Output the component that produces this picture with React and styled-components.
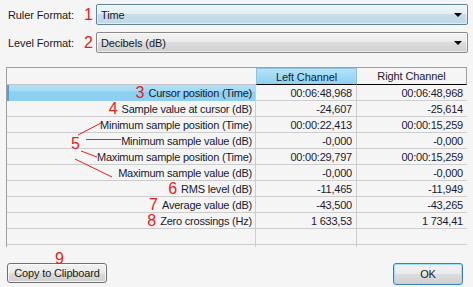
import React from "react";
import styled, { createGlobalStyle } from "styled-components";

const Global = createGlobalStyle`
  html, body { margin: 0; padding: 0; background: #f5f5f5; }
  body { font-family: "Liberation Sans", Arial, sans-serif; font-size: 11px; color: #1a1a1a; letter-spacing: -0.1px; }
`;

const Window = styled.div`
  width: 473px;
  height: 287px;
  box-sizing: border-box;
  padding-top: 4px;
  display: flex;
  flex-direction: column;
  background: #f5f5f5;
  overflow: hidden;
`;

const FormRow = styled.div`
  display: grid;
  grid-template-columns: 76px 12px 372px;
  align-items: center;
  padding-left: 8px;
  height: 21px;
  margin-bottom: ${(p) => p.$gap || 0}px;
`;

const FormLabel = styled.span`
  color: #1a1a1a;
`;

const Mark = styled.span`
  color: #e52020;
  font-size: 16px;
  line-height: 16px;
  letter-spacing: 0;
  font-family: "Liberation Sans", Arial, sans-serif;
`;

const Select = styled.div`
  height: 21px;
  box-sizing: border-box;
  border: 1px solid ${(p) => (p.$focused ? "#5d84a6" : "#8a8a8a")};
  border-radius: 2px;
  display: flex;
  align-items: center;
  justify-content: space-between;
  padding: 0 4px 0 4px;
  background: ${(p) =>
    p.$focused
      ? "linear-gradient(#eef5fa 0%, #e3eef6 45%, #c9dde9 50%, #c2d8e7 100%)"
      : "linear-gradient(#f3f3f3 0%, #ebebeb 45%, #dcdcdc 50%, #d0d0d0 100%)"};
  box-shadow: inset 0 0 0 1px ${(p) => (p.$focused ? "rgba(255,255,255,0.55)" : "rgba(255,255,255,0.6)")};
`;

const Arrow = styled.span`
  width: 0;
  height: 0;
  border-left: 4px solid transparent;
  border-right: 4px solid transparent;
  border-top: 4px solid #000;
  margin-right: 1px;
`;

const Frame = styled.div`
  position: relative;
  margin: 14px 0 0 6px;
  width: 461px;
  height: 180px;
  box-sizing: border-box;
  border-top: 1px solid #a0a0a0;
  border-left: 1px solid #a0a0a0;
  display: flex;
  flex-direction: column;
`;

const Row = styled.div`
  display: grid;
  grid-template-columns: 249px 101px 109px;
  height: 16px;
  flex: ${(p) => (p.$fill ? 1 : "none")};
  box-sizing: border-box;
  border-bottom: ${(p) => (p.$fill ? "none" : "1px solid #cdcdcd")};
`;

const HeadRow = styled.div`
  display: grid;
  grid-template-columns: 249px 101px 110px;
  height: 17px;
  box-sizing: border-box;
`;

const HeadBlank = styled.div`
  border-bottom: 1px solid #c4c4c4;
`;

const HeadCell = styled.div`
  box-sizing: border-box;
  display: flex;
  align-items: center;
  justify-content: center;
  color: #1a1a2e;
  border-bottom: 1px solid #000;
  ${(p) =>
    p.$active
      ? `background: linear-gradient(#b6e3f7 0%, #a4dbf4 40%, #8fd1f0 100%);
         border-top: 1px solid #8ec3df; border-left: 1px solid #8ec3df; border-right: 1px solid #8ec3df;`
      : `border-right: 1px solid #a0a0a0;`}
`;

const Cell = styled.div`
  box-sizing: border-box;
  display: flex;
  align-items: center;
  justify-content: flex-end;
  padding-right: ${(p) => p.$pad || 4}px;
  border-right: ${(p) => (p.$last ? "none" : "1px solid #cdcdcd")};
  color: #1a1a2e;
  white-space: nowrap;
  letter-spacing: -0.22px;
  ${(p) =>
    p.$selected &&
    `background: linear-gradient(#b1e0f7 0%, #a5dbf5 35%, #8ed0f1 45%, #8ccff0 100%);
     box-shadow: inset 2px 0 0 #5a9ec8;`}
`;

const LabelMark = styled(Mark)`
  margin-right: 4px;
`;

const Overlay = styled.svg`
  position: absolute;
  left: 0;
  top: 0;
  width: 460px;
  height: 179px;
  pointer-events: none;
  overflow: visible;
`;

const FloatMark = styled(Mark)`
  position: absolute;
  left: ${(p) => p.$x}px;
  top: ${(p) => p.$y}px;
`;

const ButtonBar = styled.div`
  display: flex;
  justify-content: space-between;
  align-items: flex-start;
  margin-top: 16px;
  padding: 0 10px 0 7px;
`;

const ButtonWrap = styled.div`
  position: relative;
`;

const Button = styled.button`
  font-family: "Liberation Sans", Arial, sans-serif;
  font-size: 11px;
  letter-spacing: -0.15px;
  color: #1a1a1a;
  height: ${(p) => (p.$default ? 22 : 20)}px;
  width: ${(p) => p.$w}px;
  padding: 0;
  border-radius: 3px;
  border: 1px solid ${(p) => (p.$default ? "#3c7fb1" : "#707070")};
  background: linear-gradient(#f2f2f2 0%, #ebebeb 48%, #dddddd 52%, #cfcfcf 100%);
  box-shadow: inset 0 0 0 1px ${(p) => (p.$default ? "#9ee0f8" : "rgba(255,255,255,0.7)")};
`;

const rows = [
  { mark: "3", label: "Cursor position (Time)", l: "00:06:48,968", r: "00:06:48,968", sel: true },
  { mark: "4", label: "Sample value at cursor (dB)", l: "-24,607", r: "-25,614" },
  { label: "Minimum sample position (Time)", l: "00:00:22,413", r: "00:00:15,259" },
  { label: "Minimum sample value (dB)", l: "-0,000", r: "-0,000" },
  { label: "Maximum sample position (Time)", l: "00:00:29,797", r: "00:00:15,259" },
  { label: "Maximum sample value (dB)", l: "-0,000", r: "-0,000" },
  { mark: "6", label: "RMS level (dB)", l: "-11,465", r: "-11,949" },
  { mark: "7", label: "Average value (dB)", l: "-43,500", r: "-43,265" },
  { mark: "8", label: "Zero crossings (Hz)", l: "1 633,53", r: "1 734,41" },
];

export default function App() {
  return (
    <Window>
      <Global />
      <FormRow $gap={7}>
        <FormLabel>Ruler Format:</FormLabel>
        <Mark>1</Mark>
        <Select $focused>
          <span>Time</span>
          <Arrow />
        </Select>
      </FormRow>
      <FormRow>
        <FormLabel>Level Format:</FormLabel>
        <Mark>2</Mark>
        <Select>
          <span>Decibels (dB)</span>
          <Arrow />
        </Select>
      </FormRow>

      <Frame>
        <HeadRow>
          <HeadBlank />
          <HeadCell $active>Left Channel</HeadCell>
          <HeadCell>Right Channel</HeadCell>
        </HeadRow>
        {rows.map((r) => (
          <Row key={r.label}>
            <Cell $pad={3} $selected={r.sel}>
              {r.mark && <LabelMark>{r.mark}</LabelMark>}
              {r.label}
            </Cell>
            <Cell $pad={4}>{r.l}</Cell>
            <Cell $pad={3} $last>{r.r}</Cell>
          </Row>
        ))}
        <Row>
          <Cell />
          <Cell />
          <Cell $last />
        </Row>
        <Row $fill>
          <Cell />
          <Cell />
          <Cell $last />
        </Row>
        <Overlay viewBox="0 0 460 179">
          <g stroke="#e52020" strokeWidth="1" fill="none">
            <line x1="71" y1="67" x2="94" y2="55" />
            <line x1="79" y1="71.5" x2="114" y2="71.5" />
            <line x1="74" y1="83" x2="90" y2="89" />
            <line x1="68" y1="91" x2="105" y2="109" />
          </g>
        </Overlay>
        <FloatMark $x={64} $y={68}>5</FloatMark>
      </Frame>

      <ButtonBar>
        <ButtonWrap>
          <FloatMark $x={48} $y={-12}>9</FloatMark>
          <Button $w={100}>Copy to Clipboard</Button>
        </ButtonWrap>
        <Button $default $w={70}>OK</Button>
      </ButtonBar>
    </Window>
  );
}
